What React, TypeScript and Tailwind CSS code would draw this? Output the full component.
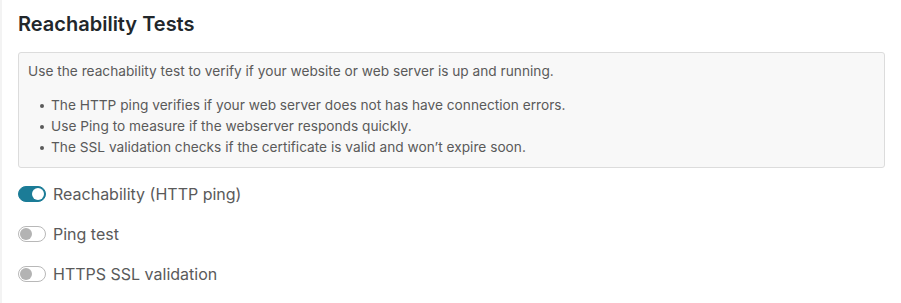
import { useState } from "react";

type Test = { id: string; label: string; on: boolean };

const initialTests: Test[] = [
  { id: "http", label: "Reachability (HTTP ping)", on: true },
  { id: "ping", label: "Ping test", on: false },
  { id: "ssl", label: "HTTPS SSL validation", on: false },
];

const notes = [
  "The HTTP ping verifies if your web server does not has have connection errors.",
  "Use Ping to measure if the webserver responds quickly.",
  "The SSL validation checks if the certificate is valid and won’t expire soon.",
];

function Toggle({ on, onClick }: { on: boolean; onClick: () => void }) {
  return (
    <button
      onClick={onClick}
      className={`relative h-[16px] w-[28px] shrink-0 rounded-full border ${
        on ? "border-[#1b7c97] bg-[#1b7c97]" : "border-[#b8b8b8] bg-white"
      }`}
    >
      <span
        className={`absolute top-[1px] h-[12px] w-[12px] rounded-full ${
          on ? "left-[13px] bg-white" : "left-[1px] bg-[#b3b3b3]"
        }`}
      />
    </button>
  );
}

export default function App() {
  const [tests, setTests] = useState(initialTests);

  const flip = (id: string) =>
    setTests((t) => t.map((x) => (x.id === id ? { ...x, on: !x.on } : x)));

  return (
    <div className="min-h-[303px] border-l-2 border-[#f3f3f3] bg-white px-[16px] pt-[11px] font-['Inter',sans-serif]">
      <h2 className="text-[20px] font-semibold leading-[26px] text-[#22272b]">Reachability Tests</h2>

      <div className="mt-[15px] rounded-[3px] border border-[#dcdcdc] bg-[#f8f8f8] px-[9px] pt-[8px] pb-[9px] text-[13.7px] leading-[21px] text-[#5a5a5a]">
        <p>Use the reachability test to verify if your website or web server is up and running.</p>
        <ul className="mt-[13px]">
          {notes.map((n) => (
            <li key={n} className="flex items-center">
              <span className="ml-[12px] mr-[7px] h-[4px] w-[4px] rounded-full bg-[#5a5a5a]" />
              <span>{n}</span>
            </li>
          ))}
        </ul>
      </div>

      <div className="mt-[15px] flex flex-col gap-[18px]">
        {tests.map((t) => (
          <label key={t.id} className="flex h-[22px] items-center gap-[7px] text-[16px] text-[#5a5a5a]">
            <Toggle on={t.on} onClick={() => flip(t.id)} />
            <span>{t.label}</span>
          </label>
        ))}
      </div>
    </div>
  );
}
